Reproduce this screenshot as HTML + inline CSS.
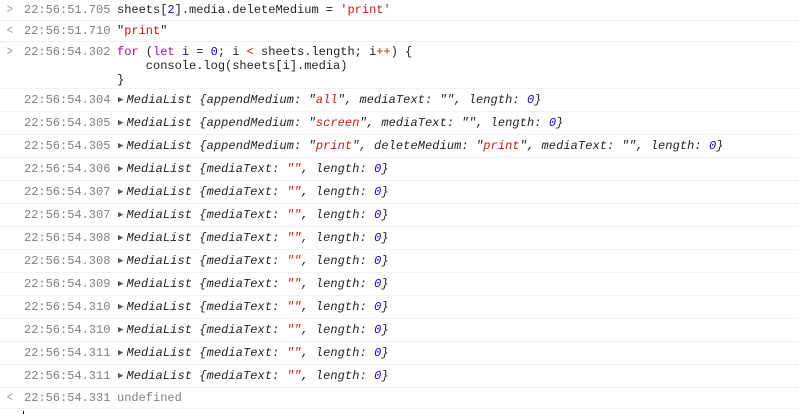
<!DOCTYPE html>
<html><head><style>
body{margin:0;width:799px;height:414px;background:#fff;overflow:hidden;font-family:"Liberation Mono",monospace;font-size:12px;color:#222}
.r{position:relative;border-bottom:1px solid #f0f0f0;box-sizing:border-box}
.ic{position:absolute;left:6px;color:#999;font-size:13px;transform:scaleX(0.8)}
.t{position:absolute;left:24px;color:#808080}
.c{position:absolute;left:117px;white-space:pre}
.o{position:absolute;left:118px;white-space:pre;font-style:italic;color:#222;letter-spacing:0.08px}
.o b{font-style:normal;font-weight:normal;color:#555;font-size:9px;margin-right:3px;position:relative;top:-1px}
.s{color:#c41a16}.n{color:#1c00cf}.k{color:#aa0d91}
</style></head><body>
<div class="r" style="height:21px"><span class="ic" style="top:2px">&gt;</span><span class="t" style="top:3px">22:56:51.705</span><span class="c" style="top:3px">sheets[<span class="n">2</span>].media.deleteMedium = <span class="s">'print'</span></span></div>
<div class="r" style="height:21px"><span class="ic" style="top:2px">&lt;</span><span class="t" style="top:3px">22:56:51.710</span><span class="c" style="top:3px">"<span class="s">print</span>"</span></div>
<div class="r" style="height:47px"><span class="ic" style="top:2px">&gt;</span><span class="t" style="top:3px">22:56:54.302</span><span class="c" style="top:3px;line-height:14px"><span class="k">for</span> (<span class="k">let</span> <span class="n">i</span> = <span class="n">0</span>; i <span class="s">&lt;</span> sheets.length; i<span class="s">++</span>) {
    console.log(sheets[i].media)
}</span></div>
<div class="r" style="height:23px"><span class="t" style="top:4px">22:56:54.304</span><span class="o" style="top:4px"><b>▶</b>MediaList {appendMedium: "<span class="s">all</span>", mediaText: "", length: <span class="n">0</span>}</span></div>
<div class="r" style="height:23px"><span class="t" style="top:4px">22:56:54.305</span><span class="o" style="top:4px"><b>▶</b>MediaList {appendMedium: "<span class="s">screen</span>", mediaText: "", length: <span class="n">0</span>}</span></div>
<div class="r" style="height:23px"><span class="t" style="top:4px">22:56:54.305</span><span class="o" style="top:4px"><b>▶</b>MediaList {appendMedium: "<span class="s">print</span>", deleteMedium: "<span class="s">print</span>", mediaText: "", length: <span class="n">0</span>}</span></div>
<div class="r" style="height:23px"><span class="t" style="top:4px">22:56:54.306</span><span class="o" style="top:4px"><b>▶</b>MediaList {mediaText: <span class="s">""</span>, length: <span class="n">0</span>}</span></div>
<div class="r" style="height:23px"><span class="t" style="top:4px">22:56:54.307</span><span class="o" style="top:4px"><b>▶</b>MediaList {mediaText: <span class="s">""</span>, length: <span class="n">0</span>}</span></div>
<div class="r" style="height:23px"><span class="t" style="top:4px">22:56:54.307</span><span class="o" style="top:4px"><b>▶</b>MediaList {mediaText: <span class="s">""</span>, length: <span class="n">0</span>}</span></div>
<div class="r" style="height:23px"><span class="t" style="top:4px">22:56:54.308</span><span class="o" style="top:4px"><b>▶</b>MediaList {mediaText: <span class="s">""</span>, length: <span class="n">0</span>}</span></div>
<div class="r" style="height:23px"><span class="t" style="top:4px">22:56:54.308</span><span class="o" style="top:4px"><b>▶</b>MediaList {mediaText: <span class="s">""</span>, length: <span class="n">0</span>}</span></div>
<div class="r" style="height:23px"><span class="t" style="top:4px">22:56:54.309</span><span class="o" style="top:4px"><b>▶</b>MediaList {mediaText: <span class="s">""</span>, length: <span class="n">0</span>}</span></div>
<div class="r" style="height:23px"><span class="t" style="top:4px">22:56:54.310</span><span class="o" style="top:4px"><b>▶</b>MediaList {mediaText: <span class="s">""</span>, length: <span class="n">0</span>}</span></div>
<div class="r" style="height:23px"><span class="t" style="top:4px">22:56:54.310</span><span class="o" style="top:4px"><b>▶</b>MediaList {mediaText: <span class="s">""</span>, length: <span class="n">0</span>}</span></div>
<div class="r" style="height:23px"><span class="t" style="top:4px">22:56:54.311</span><span class="o" style="top:4px"><b>▶</b>MediaList {mediaText: <span class="s">""</span>, length: <span class="n">0</span>}</span></div>
<div class="r" style="height:23px"><span class="t" style="top:4px">22:56:54.311</span><span class="o" style="top:4px"><b>▶</b>MediaList {mediaText: <span class="s">""</span>, length: <span class="n">0</span>}</span></div>
<div class="r" style="height:21px"><span class="ic" style="top:2px">&lt;</span><span class="t" style="top:3px">22:56:54.331</span><span class="c" style="top:3px;color:#808080">undefined</span></div>
<div style="position:absolute;left:23px;top:411px;width:1px;height:3px;background:#000"></div>
</body></html>
